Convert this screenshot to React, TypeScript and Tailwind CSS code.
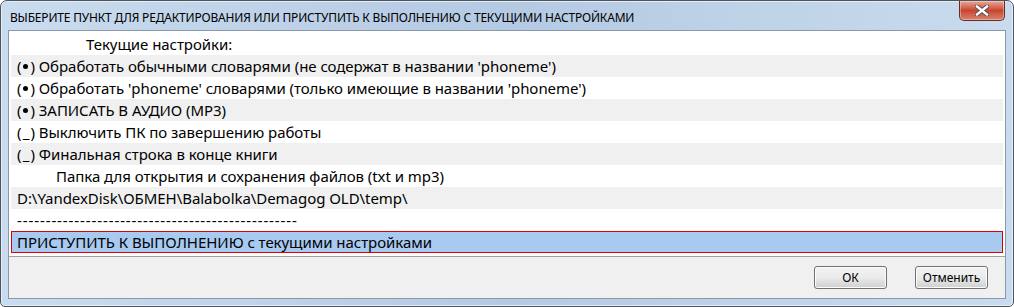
import React from "react";

const font = { fontFamily: '"Noto Sans", "Open Sans", sans-serif' };

function Dot() {
  return (
    <span className="inline-block w-[9px] text-center">
      <span className="inline-block w-[5px] h-[5px] rounded-full bg-black align-middle relative top-[-1px]" />
    </span>
  );
}

function Row({ children, gray, indent = 0, track = "tracking-[-0.05px]" }: { children: React.ReactNode; gray?: boolean; indent?: number; track?: string }) {
  return (
    <div
      className={`h-[22px] flex items-center whitespace-nowrap text-[15px] leading-none text-black ${track} ${gray ? "bg-[#f0f0f0]" : "bg-white"}`}
    >
      <span style={{ paddingLeft: 6 + indent }}>{children}</span>
    </div>
  );
}

function Btn({ label }: { label: string }) {
  return (
    <div className="w-[73px] h-[23px] rounded-[3px] border border-[#707070] bg-gradient-to-b from-[#f2f2f2] via-[#ebebeb] to-[#cfcfcf] shadow-[inset_0_0_0_1px_#fcfcfc] flex items-center justify-center text-[12px] text-black">
      {label}
    </div>
  );
}

export default function App() {
  return (
    <div className="w-[1014px] h-[307px] bg-white" style={font}>
      <div className="w-[1014px] h-[307px] rounded-t-[7px] rounded-b-[5px] border border-[#4e545c] bg-gradient-to-r from-[#c9dcef] via-[#b4cae3] to-[#c9dbee] flex flex-col overflow-hidden shadow-[inset_0_0_0_1px_#e6eef8]">
        <div className="h-[29px] flex items-start justify-between pl-[9px] pr-[8px] shrink-0">
          <div className="pt-[11px] text-[12px] leading-none text-black whitespace-nowrap tracking-[-0.18px]">
            ВЫБЕРИТЕ ПУНКТ ДЛЯ РЕДАКТИРОВАНИЯ ИЛИ ПРИСТУПИТЬ К ВЫПОЛНЕНИЮ С ТЕКУЩИМИ НАСТРОЙКАМИ
          </div>
          <div className="w-[46px] h-[20px] rounded-b-[5px] border border-t-0 border-[#6b2a22] bg-gradient-to-b from-[#e9a797] via-[#c7452f] to-[#d9826d] flex items-center justify-center shadow-[inset_0_0_0_1px_rgba(255,255,255,0.35)]">
            <svg width="14" height="11" viewBox="0 0 14 11">
              <path d="M2 1.5 L12 9.5 M12 1.5 L2 9.5" stroke="#4a4a4a" strokeWidth="4.2" strokeLinecap="square" />
              <path d="M2 1.5 L12 9.5 M12 1.5 L2 9.5" stroke="#ffffff" strokeWidth="2.4" strokeLinecap="square" />
            </svg>
          </div>
        </div>
        <div className="mx-[7px] h-[269px] border border-[#8a98aa] bg-[#f0f0f0] flex flex-col shrink-0">
          <div className="h-[226px] bg-white border-b border-[#a0a0a0] pt-[2px] px-[2px] flex flex-col">
            <Row indent={69}>Текущие настройки:</Row>
            <Row gray>(<Dot />) Обработать обычными словарями (не содержат в названии 'phoneme')</Row>
            <Row>(<Dot />) Обработать 'phoneme' словарями (только имеющие в названии 'phoneme')</Row>
            <Row gray>(<Dot />) ЗАПИСАТЬ В АУДИО (MP3)</Row>
            <Row>(<span className="inline-block w-[9px] text-center">_</span>) Выключить ПК по завершению работы</Row>
            <Row gray>(<span className="inline-block w-[9px] text-center">_</span>) Финальная строка в конце книги</Row>
            <Row indent={39}>Папка для открытия и сохранения файлов (txt и mp3)</Row>
            <Row gray>D:\YandexDisk\ОБМЕН\Balabolka\Demagog OLD\temp\</Row>
            <Row track="tracking-[0.9px]">-------------------------------------------------</Row>
            <div className="h-[22px] flex items-center whitespace-nowrap text-[15px] leading-none text-black tracking-[-0.05px] bg-[#a8caf0] border border-[#e00000]">
              <span className="pl-[5px]">ПРИСТУПИТЬ К ВЫПОЛНЕНИЮ с текущими настройками</span>
            </div>
          </div>
          <div className="flex-1 flex items-center justify-end gap-[28px] pr-[17px]">
            <Btn label="ОК" />
            <Btn label="Отменить" />
          </div>
        </div>
      </div>
    </div>
  );
}
